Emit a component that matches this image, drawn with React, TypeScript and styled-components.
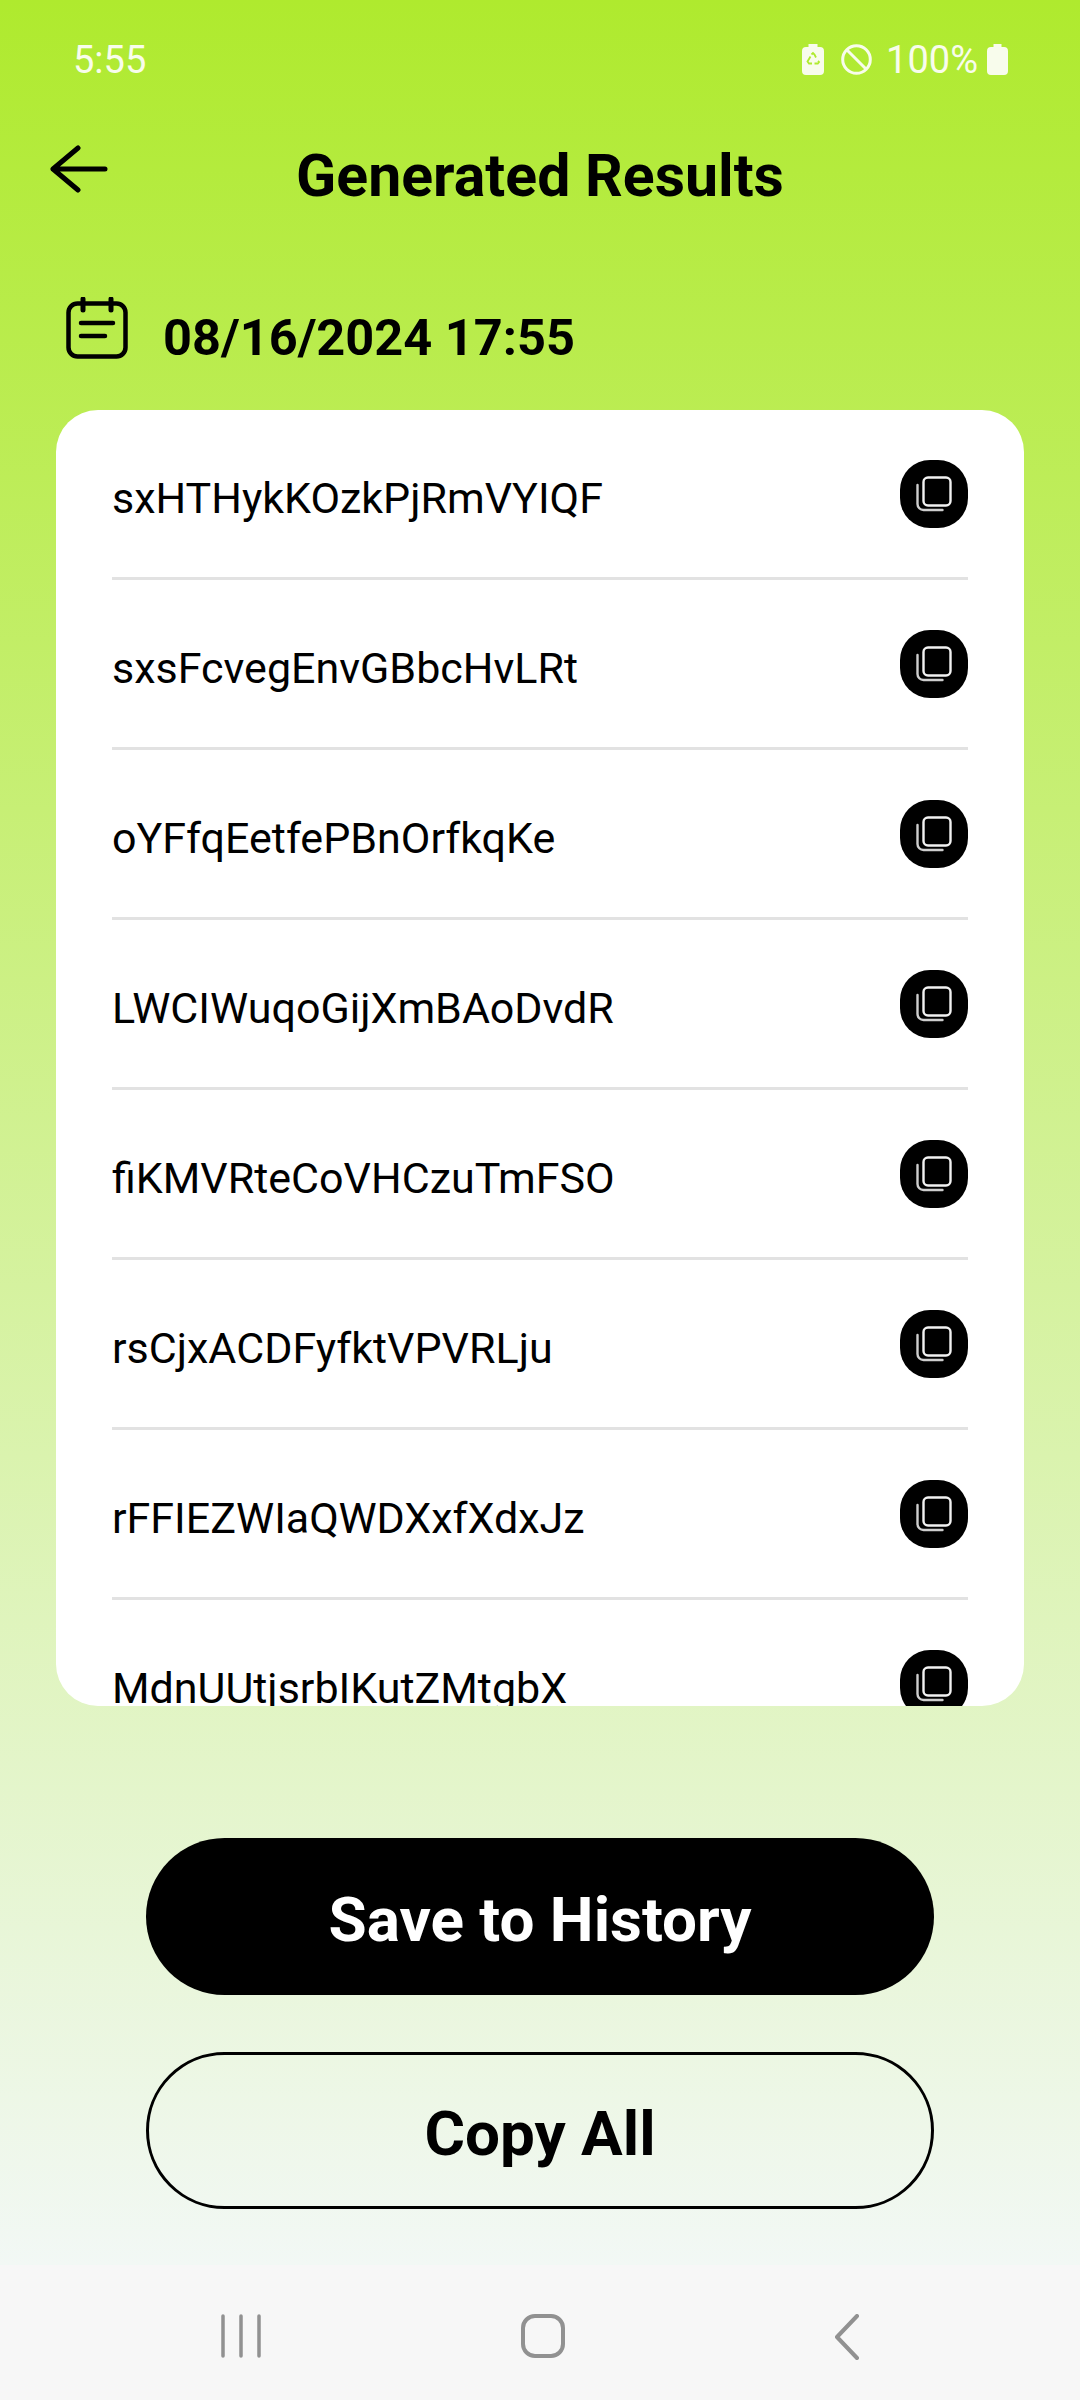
import React from 'react'
import styled, { createGlobalStyle } from 'styled-components'

const GlobalStyle = createGlobalStyle`
  html, body { margin: 0; padding: 0; }
  body { font-family: Roboto, "Liberation Sans", sans-serif; }
`

const Screen = styled.div`
  width: 1080px;
  height: 2400px;
  overflow: hidden;
  display: flex;
  flex-direction: column;
  background: linear-gradient(180deg, #afea2e 0, #f2f8f5 2265px);
`

const StatusBar = styled.div`
  height: 116px;
  box-sizing: border-box;
  padding: 3px 72px 0 73px;
  display: flex;
  align-items: center;
  justify-content: space-between;
  color: #f8fcec;
  font-size: 38px;
  font-weight: 400;
`

const StatusRight = styled.div`
  display: flex;
  align-items: center;
  gap: 14px;
`

const RecycleBattery = styled.svg`
  margin-right: 3px;
`

const Battery = styled.svg`
  margin-left: -5px;
`

const Header = styled.div`
  height: 118px;
  position: relative;
  display: flex;
  align-items: center;
  justify-content: center;
`

const BackButton = styled.div`
  position: absolute;
  left: 50px;
  top: 29px;
  display: flex;
`

const Title = styled.div`
  font-size: 59px;
  font-weight: 700;
  color: #000;
`

const DateRow = styled.div`
  margin-top: 68px;
  height: 70px;
  padding-left: 66px;
  display: flex;
  align-items: center;
  gap: 35px;
  font-size: 50.5px;
  font-weight: 700;
  color: #000;
`

const CalendarIcon = styled.svg`
  margin-bottom: 18px;
`

const Card = styled.div`
  margin: 38px 56px 0;
  height: 1296px;
  padding: 0 56px;
  background: #fff;
  border-radius: 42px;
  overflow: hidden;
`

const Row = styled.div`
  height: 170px;
  box-sizing: border-box;
  border-bottom: 3px solid #e2e2e2;
  display: flex;
  align-items: center;
  justify-content: space-between;
  font-size: 43px;
  color: #000;
`

const RowText = styled.span`
  margin-top: 8px;
`

const CopyButton = styled.div`
  width: 68px;
  height: 68px;
  border-radius: 30px;
  background: #000;
  display: flex;
  align-items: center;
  justify-content: center;
`

const Actions = styled.div`
  margin-top: 132px;
  padding: 0 146px;
  display: flex;
  flex-direction: column;
  gap: 57px;
`

const ActionButton = styled.div<{ $filled?: boolean }>`
  height: 157px;
  box-sizing: border-box;
  padding-top: 5px;
  border-radius: 79px;
  display: flex;
  align-items: center;
  justify-content: center;
  font-size: 62px;
  font-weight: 700;
  background: ${(p) => (p.$filled ? '#000' : 'transparent')};
  color: ${(p) => (p.$filled ? '#fff' : '#000')};
  border: ${(p) => (p.$filled ? 'none' : '3px solid #000')};
`

const NavBar = styled.div`
  margin-top: auto;
  height: 135px;
  box-sizing: border-box;
  display: flex;
  align-items: flex-start;
  padding-top: 49px;
  background: #f7f7f7;
`

const NavSlot = styled.div<{ $left: number }>`
  margin-left: ${(p) => p.$left}px;
  display: flex;
`

const items = [
  'sxHTHykKOzkPjRmVYIQF',
  'sxsFcvegEnvGBbcHvLRt',
  'oYFfqEetfePBnOrfkqKe',
  'LWCIWuqoGijXmBAoDvdR',
  'fiKMVRteCoVHCzuTmFSO',
  'rsCjxACDFyfktVPVRLju',
  'rFFIEZWIaQWDXxfXdxJz',
  'MdnUUtjsrbIKutZMtgbX',
]

function CopyIcon() {
  return (
    <svg width="40" height="40" viewBox="0 0 40 40" fill="none" stroke="#f2f2f2" strokeLinecap="round">
      <rect x="9.5" y="3.5" width="27" height="28" rx="4.500" strokeWidth="2.4" />
      <path d="M3.5 11v19a6 6 0 0 0 6 6h19" strokeWidth="2.4" opacity="0.85" />
    </svg>
  )
}

export default function App() {
  return (
    <>
      <GlobalStyle />
      <Screen>
        <StatusBar>
          <span>5:55</span>
          <StatusRight>
            <RecycleBattery width="22" height="31" viewBox="0 0 22 31">
              <path
                d="M6.500 0h9v3h2.500a4 4 0 0 1 4 4v20a4 4 0 0 1-4 4H4a4 4 0 0 1-4-4V7a4 4 0 0 1 4-4h2.500z"
                fill="#f8fcec"
              />
              <path
                d="M9.500 10.500L11 9l1.500 1.500 1.500 3M8.500 12.500l-3 5 1.500 2h3M16 17l1 1-1.200 1.500H12.500M12.500 19.500"
                stroke="#afea2e"
                strokeWidth="1.800"
                fill="none"
              />
            </RecycleBattery>
            <svg width="31" height="31" viewBox="0 0 31 31" fill="none" stroke="#f8fcec" strokeWidth="3">
              <circle cx="15.5" cy="15.5" r="13.800" />
              <path d="M6 6l19 19" />
            </svg>
            <span>100%</span>
            <Battery width="21" height="31" viewBox="0 0 21 31">
              <path
                d="M6.500 0h8v3h2.500a4 4 0 0 1 4 4v20a4 4 0 0 1-4 4H4a4 4 0 0 1-4-4V7a4 4 0 0 1 4-4h2.500z"
                fill="#f8fcec"
              />
            </Battery>
          </StatusRight>
        </StatusBar>

        <Header>
          <BackButton>
            <svg width="58" height="48" viewBox="0 0 58 48" fill="none" stroke="#000" strokeWidth="5" strokeLinecap="round" strokeLinejoin="round">
              <path d="M55 24H3M28 3L3 24l25 21" />
            </svg>
          </BackButton>
          <Title>Generated Results</Title>
        </Header>

        <DateRow>
          <CalendarIcon width="62" height="62" viewBox="0 0 62 62" fill="none" stroke="#000" strokeWidth="4.500" strokeLinecap="round">
            <rect x="2.500" y="6.500" width="57" height="53" rx="9" />
            <path d="M17 2v11M45 2v11" strokeWidth="5" />
            <path d="M15 26h32M15 39h24" />
          </CalendarIcon>
          <span>08/16/2024 17:55</span>
        </DateRow>

        <Card>
          {items.map((item) => (
            <Row key={item}>
              <RowText>{item}</RowText>
              <CopyButton>
                <CopyIcon />
              </CopyButton>
            </Row>
          ))}
        </Card>

        <Actions>
          <ActionButton $filled>Save to History</ActionButton>
          <ActionButton>Copy All</ActionButton>
        </Actions>

        <NavBar>
          <NavSlot $left={221}>
            <svg width="40" height="44" viewBox="0 0 40 44" stroke="#919191" strokeWidth="3.500" strokeLinecap="round">
              <path d="M2 2v40M20 2v40M38 2v40" />
            </svg>
          </NavSlot>
          <NavSlot $left={260}>
            <svg width="44" height="44" viewBox="0 0 44 44" fill="none" stroke="#919191" strokeWidth="4">
              <rect x="2" y="2" width="40" height="40" rx="12" />
            </svg>
          </NavSlot>
          <NavSlot $left={269}>
            <svg width="26" height="46" viewBox="0 0 26 46" fill="none" stroke="#919191" strokeWidth="4" strokeLinecap="round" strokeLinejoin="round">
              <path d="M23 2L3 23l20 21" />
            </svg>
          </NavSlot>
        </NavBar>
      </Screen>
    </>
  )
}
